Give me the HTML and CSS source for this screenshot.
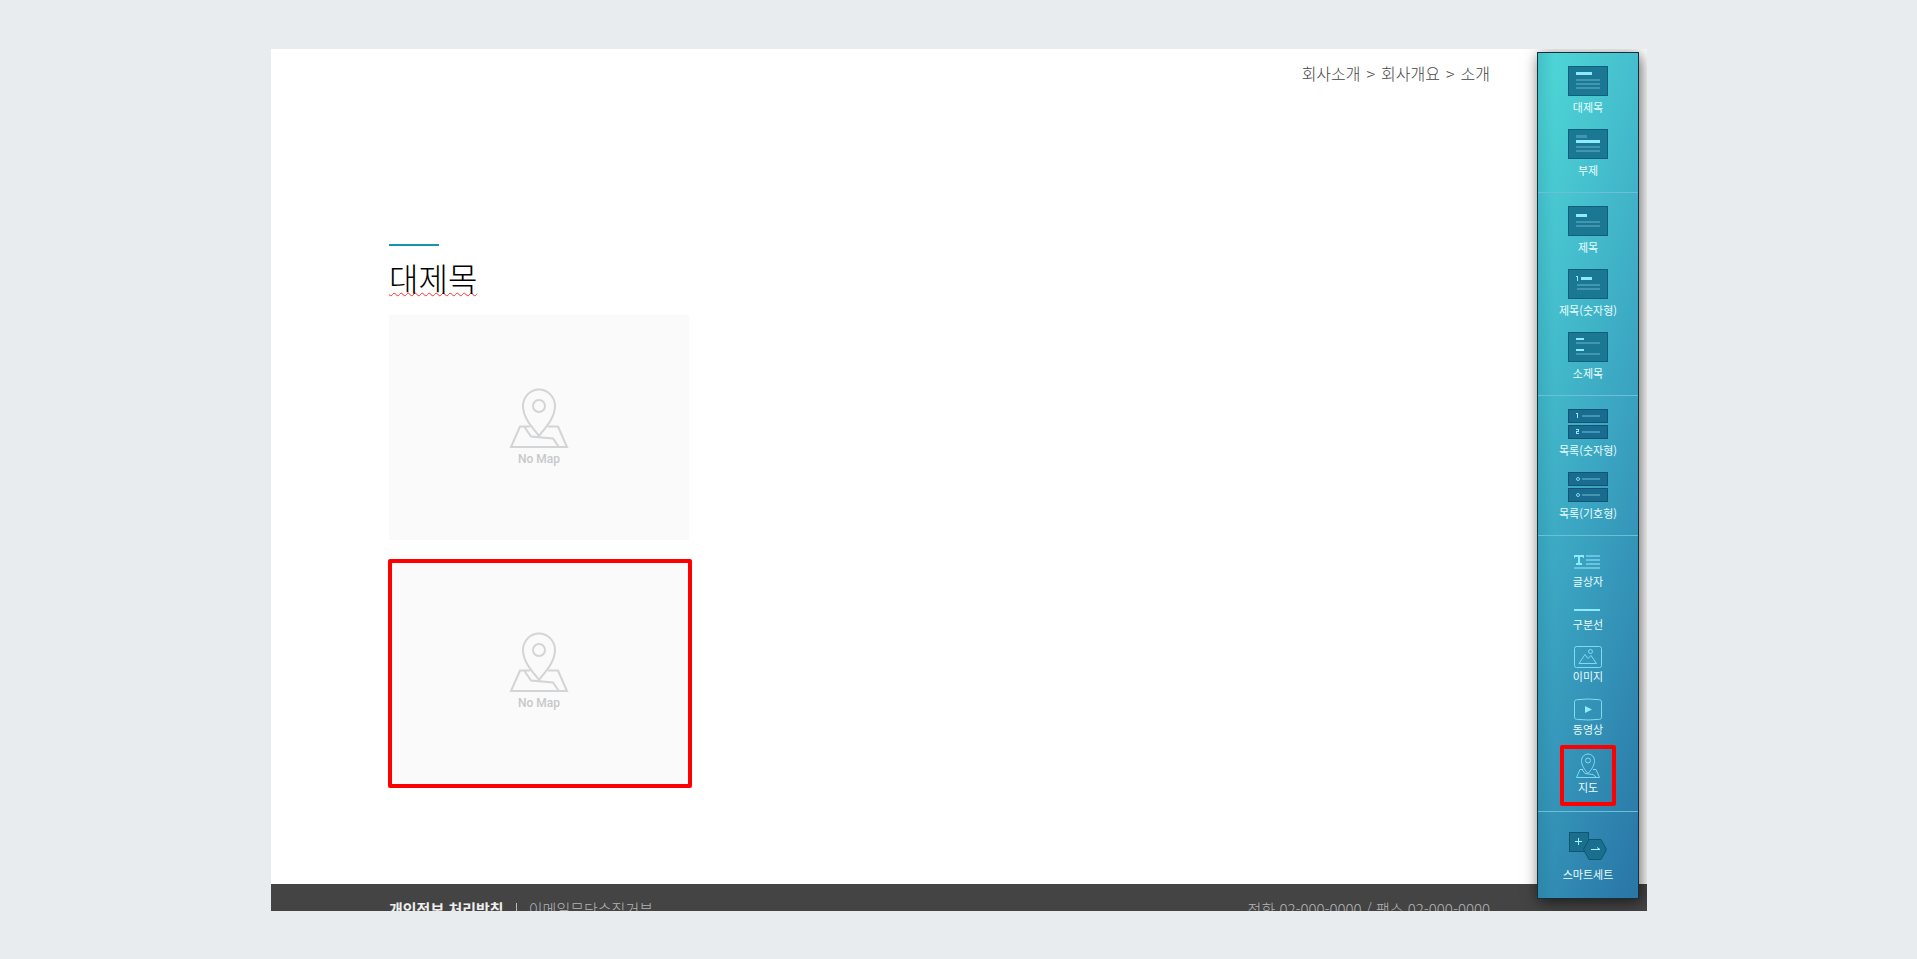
FILE: index.html
```
<!DOCTYPE html>
<html lang="ko">
<head>
  <meta charset="UTF-8">
  <title>회사소개</title>
  <meta name="viewport" content="width=device-width, initial-scale=1.0">
  <link rel="stylesheet" href="styles.css">
</head>
<body>
  <div class="page">
    <main class="content">
      <nav class="breadcrumb">
        <a href="#">회사소개</a>
        <span>&gt;</span>
        <a href="#">회사개요</a>
        <span>&gt;</span>
        <a href="#">소개</a>
      </nav>

      <section class="section">
        <h1><span>대제목</span></h1>

        <div class="map">
          <svg width="60" height="60" viewBox="0 0 60 60">
            <path d="M21 38.500H11L2 59H58L49 38.500H39M15.500 39L22 48.500L44 50.500L49.500 58.500"/>
            <path d="M30 48C24 40 14 30 14 18A16 16.500 0 0 1 46 18C46 30 36 40 30 48Z"/>
            <circle cx="30" cy="18" r="6"/>
          </svg>
          <span>No Map</span>
        </div>

        <div class="map selected">
          <svg width="60" height="60" viewBox="0 0 60 60">
            <path d="M21 38.500H11L2 59H58L49 38.500H39M15.500 39L22 48.500L44 50.500L49.500 58.500"/>
            <path d="M30 48C24 40 14 30 14 18A16 16.500 0 0 1 46 18C46 30 36 40 30 48Z"/>
            <circle cx="30" cy="18" r="6"/>
          </svg>
          <span>No Map</span>
        </div>
      </section>
    </main>

    <footer class="footer">
      <div class="footer-links">
        <a href="#" class="privacy">개인정보 처리방침</a>
        <a href="#" class="email">이메일무단수집거부</a>
      </div>
      <p>전화 02-000-0000 / 팩스 02-000-0000</p>
    </footer>

    <aside class="toolbar">
      <div class="group">
        <button type="button">
          <svg width="40" height="30">
            <rect class="box" x="0.5" y="0.5" width="39" height="29"/>
            <path class="hi" d="M8 6h16v3H8z"/>
            <path class="lo" d="M8 13h24v2H8zM8 17h24v2H8zM8 21h24v2H8z"/>
          </svg>
          <span>대제목</span>
        </button>
        <button type="button">
          <svg width="40" height="30">
            <rect class="box" x="0.5" y="0.5" width="39" height="29"/>
            <path class="hi" d="M8 11h24v3H8z"/>
            <path class="lo" d="M8 6h11v3H8zM8 17h24v2H8zM8 21h24v2H8z"/>
          </svg>
          <span>부제</span>
        </button>
      </div>

      <div class="group">
        <button type="button">
          <svg width="40" height="30">
            <rect class="box" x="0.5" y="0.5" width="39" height="29"/>
            <path class="hi" d="M8 8h11v3H8z"/>
            <path class="lo" d="M8 15h24v2H8zM8 19h24v2H8z"/>
          </svg>
          <span>제목</span>
        </button>
        <button type="button">
          <svg width="40" height="30">
            <rect class="box" x="0.5" y="0.5" width="39" height="29"/>
            <path class="hi" d="M8 7h2v5H9V8H8zM13 8h11v3H13z"/>
            <path class="lo" d="M9 15h23v2H9zM9 19h23v2H9z"/>
          </svg>
          <span>제목(숫자형)</span>
        </button>
        <button type="button">
          <svg width="40" height="30">
            <rect class="box" x="0.5" y="0.5" width="39" height="29"/>
            <path class="hi" d="M8 6h8v2H8zM8 17h8v2H8z"/>
            <path class="lo" d="M8 10h24v2H8zM8 21h24v2H8z"/>
          </svg>
          <span>소제목</span>
        </button>
      </div>

      <div class="group">
        <button type="button">
          <svg width="40" height="30">
            <rect class="box list" x="0.5" y="0.5" width="39" height="13"/>
            <rect class="box list" x="0.5" y="16.5" width="39" height="13"/>
            <path class="hi" d="M8 4h2v5H9V5H8zM8 20h3v3H9v1h2v1H8v-3h2v-1H8z"/>
            <path class="lo" d="M14 6h18v2H14zM14 22h18v2H14z"/>
          </svg>
          <span>목록(숫자형)</span>
        </button>
        <button type="button">
          <svg width="40" height="30">
            <rect class="box list" x="0.5" y="0.5" width="39" height="13"/>
            <rect class="box list" x="0.5" y="16.5" width="39" height="13"/>
            <circle class="line" cx="10" cy="7" r="1.500"/>
            <circle class="line" cx="10" cy="23" r="1.500"/>
            <path class="lo" d="M14 6h18v2H14zM14 22h18v2H14z"/>
          </svg>
          <span>목록(기호형)</span>
        </button>
      </div>

      <div class="group compact">
        <button type="button">
          <svg width="28" height="18">
            <path class="hi" d="M0 0h10v3H9V2H6v6h2v2H2V8h2V2H1v1H0z"/>
            <path class="mid" d="M12 0h14v2H12zM12 4h14v2H12zM12 8h14v2H12zM0 12h26v2H0z"/>
          </svg>
          <span>글상자</span>
        </button>
        <button type="button">
          <svg width="28" height="13">
            <path class="hi" d="M0 6h26v2H0z"/>
          </svg>
          <span>구분선</span>
        </button>
        <button type="button">
          <svg width="28" height="22">
            <rect class="line" x="0.5" y="0.5" width="27" height="21" rx="2"/>
            <path class="line" d="M5 17.500L11 8.500L14 12.500L17 9.500L22.500 17.500Z"/>
            <circle class="line" cx="16.500" cy="5.500" r="2"/>
          </svg>
          <span>이미지</span>
        </button>
        <button type="button">
          <svg width="28" height="23">
            <path class="line" d="M0.500 3.500Q0.500 2 2.500 1.700Q14 0.300 25.500 1.700Q27.500 2 27.500 3.500V19.500Q27.500 21 25.500 21.300Q14 22.700 2.500 21.300Q0.500 21 0.500 19.500Z"/>
            <path class="hi" d="M11 8v7l7-3.500z"/>
          </svg>
          <span>동영상</span>
        </button>
        <button type="button" class="picked">
          <svg width="28" height="28">
            <path class="line" d="M9 18.500H6L2.500 26.500H25.500L22 18.500H19M8 18.500L11 22.500L19 23.500L22 26"/>
            <path class="line" d="M14 22.500C11 19 7.500 15 7.500 9.500A6.500 6.500 0 0 1 20.500 9.500C20.500 15 17 19 14 22.500Z"/>
            <circle class="line" cx="14" cy="9.500" r="2.500"/>
          </svg>
          <span>지도</span>
        </button>
      </div>

      <div class="group smart">
        <button type="button">
          <svg width="40" height="28">
            <rect class="box" x="1.500" y="0.500" width="19" height="19"/>
            <path class="box" d="M15.500 17.500L21 7.500H33L38.500 17.500L33 27.500H21Z"/>
            <path class="sign" d="M7 9.500h7M10.500 6v7M23 17.500h9M29 15.500l3 2"/>
          </svg>
          <span>스마트세트</span>
        </button>
      </div>
    </aside>
  </div>
</body>
</html>
```
FILE: styles.css
```
* {
  box-sizing: border-box;
  margin: 0;
  padding: 0;
}

body {
  min-height: 100vh;
  padding: 49px 270px 48px 271px;
  background: #e8ecef;
  color: #444;
  font-family: "Noto Sans CJK KR", sans-serif;
  display: flex;
}

a {
  color: inherit;
  text-decoration: none;
}

.page {
  position: relative;
  flex: 1;
  display: flex;
  flex-direction: column;
  background: #fff;
  overflow: hidden;
}

.content {
  flex: 1;
  padding: 12px 157px 0 118px;
}

.breadcrumb {
  display: flex;
  justify-content: flex-end;
  gap: 6px;
  font-size: 16px;
  font-weight: 300;
  line-height: 24px;
}

.section {
  margin-top: 159px;
}

.section h1 {
  margin-bottom: 10px;
  color: #000;
  font-size: 32px;
  font-weight: 300;
  line-height: 56px;
}

.section h1::before {
  content: '';
  display: block;
  width: 50px;
  height: 2px;
  margin-bottom: 3px;
  background: #1a93ae;
}

.section h1 span {
  text-decoration: underline wavy #ff3030 1px;
  text-decoration-skip-ink: none;
  text-underline-offset: 1px;
}

.map {
  position: relative;
  width: 300px;
  height: 225px;
  margin-bottom: 19px;
  padding-top: 3px;
  background: #fafafa;
  display: flex;
  flex-direction: column;
  align-items: center;
  justify-content: center;
}

.map svg {
  fill: none;
  stroke: #d3d4d5;
  stroke-width: 2;
}

.map span {
  color: #c7c8ca;
  font-family: Roboto, sans-serif;
  font-size: 12px;
  font-weight: 500;
  line-height: 22px;
}

.map.selected::after {
  content: '';
  position: absolute;
  inset: 0 -3px -4px -1px;
  border: 4px solid #f00;
  border-radius: 2px;
}

.footer {
  height: 27px;
  padding: 15px 157px 0 118px;
  background: #444;
  color: #b4b4b4;
  display: flex;
  justify-content: space-between;
  overflow: hidden;
  font-size: 15px;
  font-weight: 300;
  line-height: 20px;
}

.footer .privacy {
  color: #eee;
  font-weight: 700;
}

.footer .email::before {
  content: '';
  display: inline-block;
  width: 1px;
  height: 12px;
  margin: 0 12px 0 8px;
  background: #bbb;
}

/* floating element toolbar */
.toolbar {
  position: absolute;
  top: 3px;
  right: 8px;
  width: 102px;
  border: 1px solid #15303a;
  background: linear-gradient(90deg, rgba(0, 80, 100, 0.15), transparent 16%), linear-gradient(108deg, #4dd4d6 5%, #3ba5c2 52%, #2a78a8 97%);
  box-shadow: 2px 3px 14px rgba(0, 0, 0, 0.6);
}

.group {
  padding-top: 13px;
  border-bottom: 1px solid #6cbfd6;
}

.toolbar button {
  width: 100%;
  margin-bottom: 14px;
  border: 0;
  background: none;
  color: #e8fdff;
  font-family: inherit;
  font-size: 11px;
  line-height: 16px;
  cursor: pointer;
  display: flex;
  flex-direction: column;
  align-items: center;
  gap: 3px;
}

.group.compact {
  padding: 19px 0 16px;
  display: flex;
  flex-direction: column;
  align-items: center;
  gap: 14px;
}

.compact button {
  position: relative;
  width: 56px;
  margin: 0;
  gap: 0;
}

.group.smart {
  padding-top: 20px;
  border: 0;
}

.smart button {
  margin-bottom: 16px;
  gap: 6px;
}

.picked::after {
  content: '';
  position: absolute;
  inset: -6px 0 -11px;
  border: 4px solid #f00;
  border-radius: 2px;
}

.box {
  fill: #1a7894;
  stroke: #115f78;
}

.box.list {
  fill: #196c90;
  stroke: #115670;
}

.smart .box {
  fill: #1a6f8f;
  stroke: #0f566e;
}

.hi {
  fill: #8eeaff;
}

.mid {
  fill: #69c5dc;
}

.lo {
  fill: #4396af;
}

.line {
  fill: none;
  stroke: #7fdcf0;
}

.sign {
  fill: none;
  stroke: #a5f2ff;
}
```
